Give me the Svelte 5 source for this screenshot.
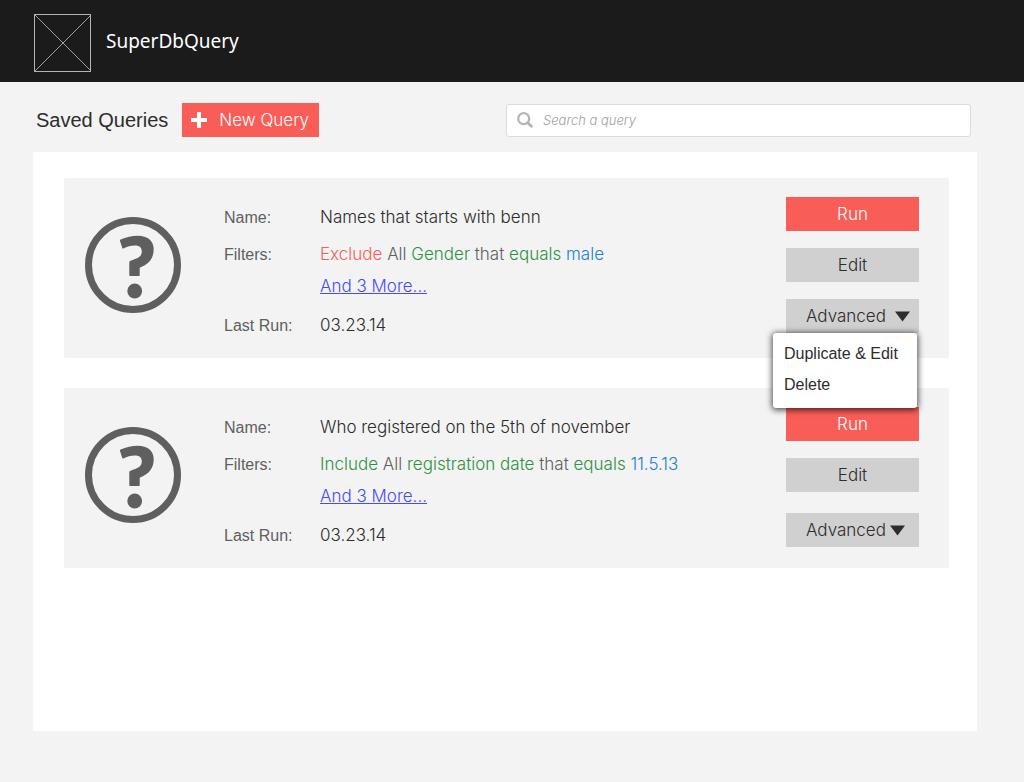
<script>
  let openMenu = $state(0);
  let search = $state('');

  const queries = [
    {
      name: 'Names that starts with benn',
      filter: [
        ['Exclude', 'red'],
        ['All', 'plain'],
        ['Gender', 'green'],
        ['that', 'plain'],
        ['equals', 'green'],
        ['male', 'blue']
      ],
      more: 'And 3 More...',
      lastRun: '03.23.14'
    },
    {
      name: 'Who registered on the 5th of november',
      filter: [
        ['Include', 'green'],
        ['All', 'plain'],
        ['registration date', 'green'],
        ['that', 'plain'],
        ['equals', 'green'],
        ['11.5.13', 'blue']
      ],
      more: 'And 3 More...',
      lastRun: '03.23.14'
    }
  ];

  function toggle(i) {
    openMenu = openMenu === i ? -1 : i;
  }
</script>

<header class="topbar">
  <svg class="logo" viewBox="0 0 58 58" aria-hidden="true">
    <path d="M1 1L57 57M57 1L1 57" stroke="#a0a0a0" fill="none" />
    <rect x="0.5" y="0.5" width="56" height="57" stroke="#b4b4b4" fill="none" />
  </svg>
  <span class="brand">SuperDbQuery</span>
</header>

<main>
  <div class="toolbar">
    <h1>Saved Queries</h1>
    <button class="new" type="button">
      <svg width="16" height="16" viewBox="0 0 16 16" aria-hidden="true">
        <path d="M6 0h4v6h6v4h-6v6H6v-6H0V6h6z" fill="#fff" />
      </svg>
      New Query
    </button>
    <label class="search">
      <svg width="16" height="16" viewBox="0 0 16 16" aria-hidden="true">
        <circle cx="6.7" cy="6.7" r="5.5" fill="none" stroke="#b4b4b4" stroke-width="2.2" />
        <path d="M10.8 10.8L14.4 14.2" stroke="#b4b4b4" stroke-width="2.8" stroke-linecap="round" />
      </svg>
      <input type="text" placeholder="Search a query" aria-label="Search a query" bind:value={search} />
    </label>
  </div>

  <section class="panel">
    {#each queries as query, i}
      <article class="card">
        <svg class="mark" viewBox="0 0 96 96" aria-hidden="true">
          <circle cx="48" cy="48" r="44.5" fill="none" stroke="#5f5f5f" stroke-width="7" />
          <path
            d="M35.6 22.6C41 20.2 47 18.8 52.8 18.8C62.5 18.8 68.7 24 68.7 32C68.7 41.5 64 47 54.7 50.8V58C54.7 58.7 54.4 59 53.7 59H45.4C44.7 59 44.3 58.7 44.3 58V45.6C44.3 44.6 44.6 44.2 45.5 43.8C52.6 41.2 56.8 40 56.8 34.6C56.8 30.6 54.4 28.6 50 28.6C45.8 28.6 42 29.8 38.4 31.5C37.9 31.7 37.5 31.5 37.3 31L35 24C34.8 23.3 35 22.9 35.6 22.6Z"
            fill="#5f5f5f"
          />
          <circle cx="49.7" cy="74" r="7.4" fill="#5f5f5f" />
        </svg>

        <dl>
          <dt>Name:</dt>
          <dd>{query.name}</dd>
          <dt>Filters:</dt>
          <dd>
            {#each query.filter as [word, tone]}<span class={tone}>{word}</span>{' '}{/each}
          </dd>
          <dd class="more"><a href="#filters">{query.more}</a></dd>
          <dt>Last Run:</dt>
          <dd>{query.lastRun}</dd>
        </dl>

        <div class="actions">
          <button class="run" type="button">Run</button>
          <button type="button">Edit</button>
          <div class="dropdown" class:open={openMenu === i}>
            <button type="button" aria-expanded={openMenu === i} onclick={() => toggle(i)}>
              Advanced
              <svg width="15" height="11" viewBox="0 0 15 11" aria-hidden="true">
                <path d="M0 0.5H15L7.5 10.5z" fill="#2d2d2d" />
              </svg>
            </button>
            {#if openMenu === i}
              <div class="menu">
                <button type="button">Duplicate &amp; Edit</button>
                <button type="button">Delete</button>
              </div>
            {/if}
          </div>
        </div>
      </article>
    {/each}
  </section>
</main>

<style>
  :global(body) {
    margin: 0;
    background: #f3f3f3;
    color: #2d2d2d;
    font-family: Inter, 'Liberation Sans', sans-serif;
    font-weight: 300;
    font-size: 17px;
    line-height: 24px;
  }

  button,
  input {
    font: inherit;
    color: inherit;
    border: 0;
    margin: 0;
    padding: 0;
  }

  button {
    cursor: pointer;
  }

  .topbar {
    display: flex;
    align-items: center;
    gap: 14px;
    padding: 14px 34px 10px;
    background: #1b1b1b;
  }

  .logo {
    width: 58px;
    height: 58px;
  }

  .brand {
    padding-bottom: 4px;
    color: #fff;
    font: 400 19px/24px 'Noto Sans', sans-serif;
  }

  main {
    padding: 21px 47px 51px 33px;
  }

  .toolbar {
    display: flex;
    align-items: center;
    padding: 0 6px 15px 3px;
  }

  h1 {
    margin: 0 14px 0 0;
    font: 400 20px/24px 'Liberation Sans', sans-serif;
  }

  .new {
    display: flex;
    align-items: center;
    gap: 12px;
    height: 34px;
    padding: 0 10px 0 9px;
    background: #f95d58;
    color: #fff;
  }

  .search {
    display: flex;
    flex: 0 1 465px;
    align-items: center;
    gap: 10px;
    box-sizing: border-box;
    height: 33px;
    margin-left: auto;
    padding: 0 10px;
    border: 1px solid #dcdcdc;
    border-radius: 3px;
    background: #fff;
  }

  .search input {
    flex: 1;
    min-width: 0;
    background: none;
    outline: none;
    font-size: 13px;
  }

  .search input::placeholder {
    color: #a0a0a0;
    font-style: italic;
    opacity: 1;
  }

  .panel {
    display: flex;
    flex-direction: column;
    gap: 30px;
    min-height: 526px;
    padding: 26px 28px 27px 31px;
    background: #fff;
  }

  .card {
    display: flex;
    align-items: flex-start;
    padding: 19px 30px 20px 21px;
    border-radius: 2px;
    background: #f3f3f3;
  }

  .mark {
    flex: none;
    width: 96px;
    height: 96px;
    margin: 20px 43px 0 0;
  }

  dl {
    display: grid;
    grid-template-columns: 96px 1fr;
    align-items: baseline;
    flex: 1;
    margin: 8px 0 0;
    row-gap: 12px;
  }

  dt {
    color: #5f5f5f;
    font: 400 16px/24px 'Liberation Sans', sans-serif;
  }

  dd {
    margin: 0;
  }

  .more {
    grid-column: 2;
    margin: -5px 0 3px;
  }

  a {
    color: #4b4bf5;
  }

  .plain {
    color: #5f5f5f;
  }

  .red {
    color: #f95d58;
  }

  .green {
    color: #2f9145;
  }

  .blue {
    color: #2080d8;
  }

  .actions {
    display: flex;
    flex-direction: column;
    gap: 17px;
    width: 133px;
  }

  .actions button {
    width: 100%;
    height: 34px;
    background: #d0d0d0;
  }

  .actions .run {
    background: #f95d58;
    color: #fff;
  }

  .dropdown {
    position: relative;
  }

  .dropdown:not(.open) {
    padding-top: 4px;
  }

  .dropdown > button {
    display: flex;
    align-items: center;
    gap: 4px;
    padding-left: 20px;
  }

  .dropdown.open > button {
    gap: 9px;
  }

  .actions .menu {
    position: absolute;
    top: 34px;
    right: 2px;
    z-index: 1;
    box-sizing: border-box;
    width: 144px;
    padding: 5px 0 8px;
    border-radius: 3px;
    background: #fff;
    box-shadow: 0 1px 6px 1px rgba(0, 0, 0, 0.7);
  }

  .actions .menu button {
    display: block;
    height: 31px;
    padding: 0 11px;
    background: none;
    font: 400 16px/31px 'Liberation Sans', sans-serif;
    text-align: left;
    white-space: nowrap;
  }
</style>
